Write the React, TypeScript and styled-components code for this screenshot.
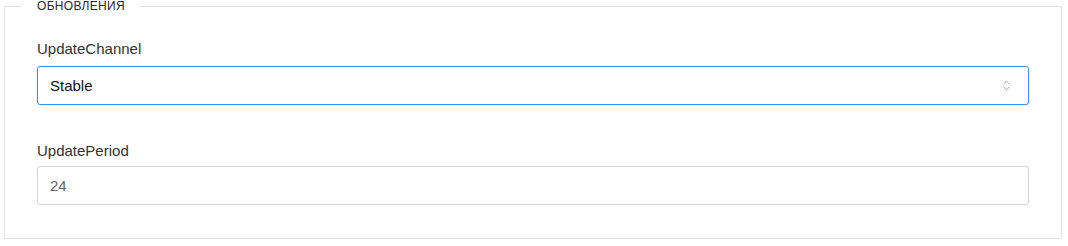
import React from "react";
import styled, { createGlobalStyle } from "styled-components";
import { ChevronsUpDown } from "lucide-react";

const Global = createGlobalStyle`
  html, body { margin: 0; padding: 0; background: #fff; }
  body { font-family: "Liberation Sans", Arial, sans-serif; color: #333; }
  * { box-sizing: border-box; }
`;

const Page = styled.div`
  padding: 0 6px 0 4px;
  width: 1068px;
`;

const Fieldset = styled.fieldset`
  margin: 0;
  border: 1px solid #e3e3e3;
  padding: 27px 32px 32px 32px;
  min-width: 0;
  width: 1058px;
  height: 239px;
`;

const Legend = styled.legend`
  margin-left: -15px;
  padding: 0 15px;
  font-family: "Liberation Sans", Arial, sans-serif;
  font-size: 12px;
  line-height: 12px;
  text-transform: uppercase;
  color: #2a2a2a;
  letter-spacing: 0.3px;
`;

const Group = styled.div<{ $last?: boolean }>`
  display: flex;
  flex-direction: column;
  margin-bottom: ${(p) => (p.$last ? 0 : 36)}px;
`;

const Label = styled.label<{ $gap: number }>`
  font-family: "Liberation Sans", Arial, sans-serif;
  font-size: 15px;
  line-height: 20px;
  color: #333;
  margin-bottom: ${(p) => p.$gap}px;
`;

const SelectBox = styled.div`
  position: relative;
  height: 39px;
  border: 1px solid #3d8fd8;
  border-radius: 3px;
  display: flex;
  align-items: center;
  padding: 0 12px;
  font-family: "Liberation Sans", Arial, sans-serif;
  font-size: 15px;
  color: #111;
  box-shadow: 0 0 2px rgba(61, 143, 216, 0.35);
`;

const SelectValue = styled.span`
  flex: 1;
`;

const Arrow = styled.span`
  display: flex;
  color: #8a8a8a;
  margin-right: 3px;
`;

const Input = styled.div`
  height: 39px;
  border: 1px solid #d4d4d4;
  border-radius: 3px;
  display: flex;
  align-items: center;
  padding: 0 12px;
  font-family: "Liberation Sans", Arial, sans-serif;
  font-size: 15px;
  color: #666;
`;

export default function App() {
  return (
    <>
      <Global />
      <Page>
        <Fieldset>
          <Legend>Обновления</Legend>
          <Group>
            <Label $gap={7}>UpdateChannel</Label>
            <SelectBox>
              <SelectValue>Stable</SelectValue>
              <Arrow>
                <ChevronsUpDown size={13} strokeWidth={1.5} />
              </Arrow>
            </SelectBox>
          </Group>
          <Group $last>
            <Label $gap={5}>UpdatePeriod</Label>
            <Input>24</Input>
          </Group>
        </Fieldset>
      </Page>
    </>
  );
}
